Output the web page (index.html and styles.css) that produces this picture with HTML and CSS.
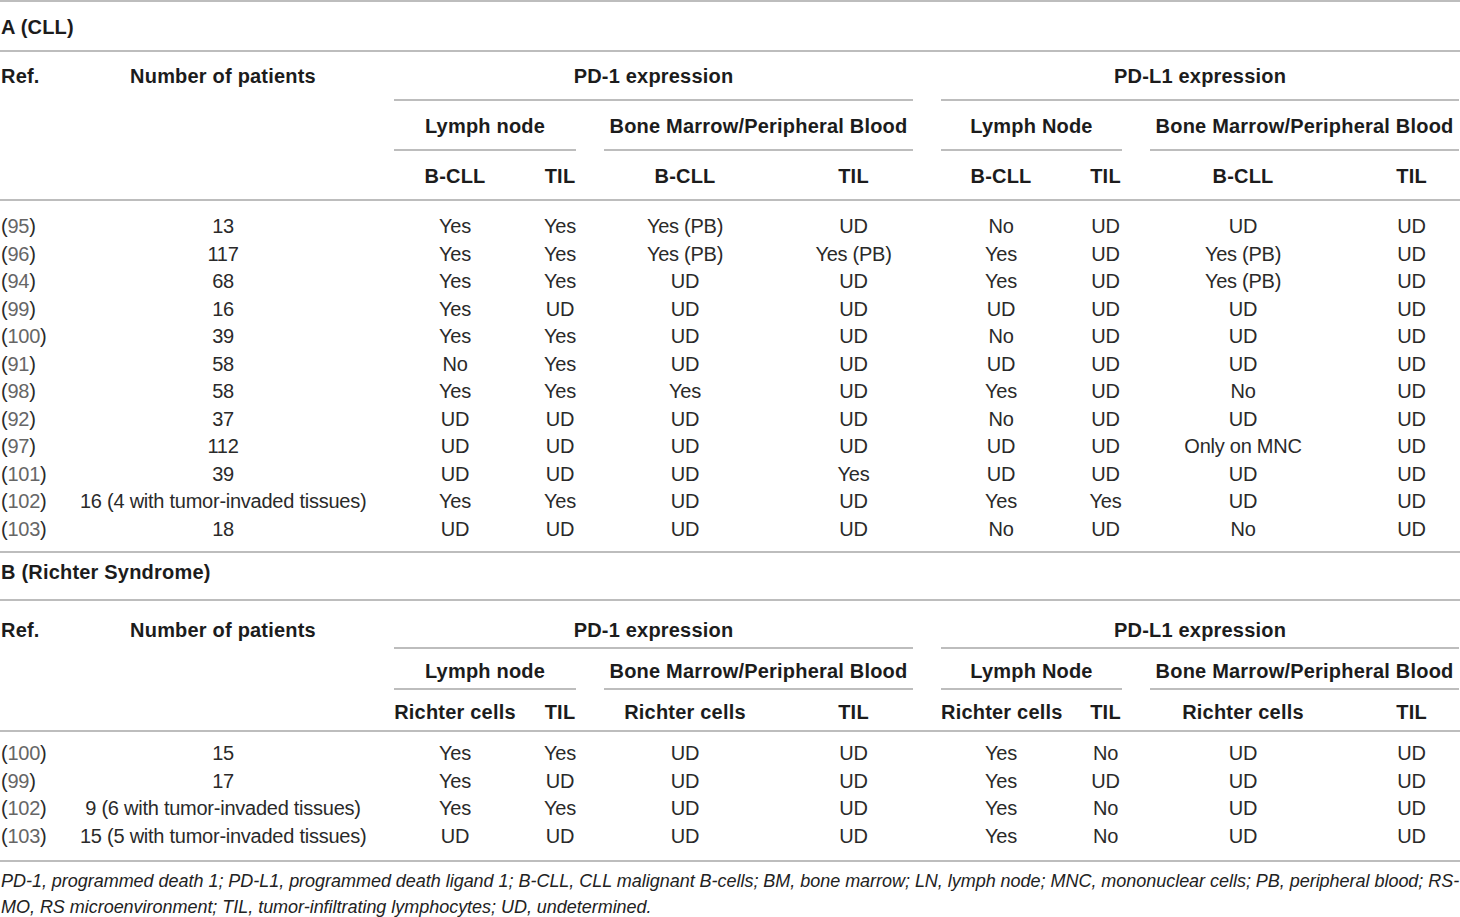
FILE: index.html
```html
<!DOCTYPE html>
<html lang="en">
<head>
  <meta charset="UTF-8" />
  <title>PD-1 / PD-L1 expression in CLL and Richter Syndrome</title>
  <link rel="stylesheet" href="styles.css">
</head>
<body>
  <table class="tbl">
    <colgroup>
      <col class="c-ref"><col class="c-num">
      <col class="c-3"><col class="c-4"><col class="c-5"><col class="c-6">
      <col class="c-7"><col class="c-8"><col class="c-9"><col class="c-10">
    </colgroup>

    <!-- A (CLL) -->
    <tr class="sec sec-a"><td colspan="10">A (CLL)</td></tr>
    <tr class="h1 h1-a">
      <th class="ref" rowspan="3"><span class="cap">Ref.</span></th>
      <th rowspan="3"><span class="cap">Number of patients</span></th>
      <th colspan="4"><span class="cap grp">PD-1 expression</span></th>
      <th colspan="4"><span class="cap grp">PD-L1 expression</span></th>
    </tr>
    <tr class="h2 h2-a">
      <th colspan="2"><span class="cap grp">Lymph node</span></th>
      <th colspan="2"><span class="cap grp">Bone Marrow/Peripheral Blood</span></th>
      <th colspan="2"><span class="cap grp">Lymph Node</span></th>
      <th colspan="2"><span class="cap grp">Bone Marrow/Peripheral Blood</span></th>
    </tr>
    <tr class="h3 h3-a">
      <th><span class="cap">B-CLL</span></th><th><span class="cap">TIL</span></th>
      <th><span class="cap">B-CLL</span></th><th><span class="cap">TIL</span></th>
      <th><span class="cap">B-CLL</span></th><th><span class="cap">TIL</span></th>
      <th><span class="cap">B-CLL</span></th><th><span class="cap">TIL</span></th>
    </tr>
    <tbody class="data data-a">
      <tr><td class="ref">(<span class="lnk">95</span>)</td><td>13</td><td>Yes</td><td>Yes</td><td>Yes (PB)</td><td>UD</td><td>No</td><td>UD</td><td>UD</td><td>UD</td></tr>
      <tr><td class="ref">(<span class="lnk">96</span>)</td><td>117</td><td>Yes</td><td>Yes</td><td>Yes (PB)</td><td>Yes (PB)</td><td>Yes</td><td>UD</td><td>Yes (PB)</td><td>UD</td></tr>
      <tr><td class="ref">(<span class="lnk">94</span>)</td><td>68</td><td>Yes</td><td>Yes</td><td>UD</td><td>UD</td><td>Yes</td><td>UD</td><td>Yes (PB)</td><td>UD</td></tr>
      <tr><td class="ref">(<span class="lnk">99</span>)</td><td>16</td><td>Yes</td><td>UD</td><td>UD</td><td>UD</td><td>UD</td><td>UD</td><td>UD</td><td>UD</td></tr>
      <tr><td class="ref">(<span class="lnk">100</span>)</td><td>39</td><td>Yes</td><td>Yes</td><td>UD</td><td>UD</td><td>No</td><td>UD</td><td>UD</td><td>UD</td></tr>
      <tr><td class="ref">(<span class="lnk">91</span>)</td><td>58</td><td>No</td><td>Yes</td><td>UD</td><td>UD</td><td>UD</td><td>UD</td><td>UD</td><td>UD</td></tr>
      <tr><td class="ref">(<span class="lnk">98</span>)</td><td>58</td><td>Yes</td><td>Yes</td><td>Yes</td><td>UD</td><td>Yes</td><td>UD</td><td>No</td><td>UD</td></tr>
      <tr><td class="ref">(<span class="lnk">92</span>)</td><td>37</td><td>UD</td><td>UD</td><td>UD</td><td>UD</td><td>No</td><td>UD</td><td>UD</td><td>UD</td></tr>
      <tr><td class="ref">(<span class="lnk">97</span>)</td><td>112</td><td>UD</td><td>UD</td><td>UD</td><td>UD</td><td>UD</td><td>UD</td><td>Only on MNC</td><td>UD</td></tr>
      <tr><td class="ref">(<span class="lnk">101</span>)</td><td>39</td><td>UD</td><td>UD</td><td>UD</td><td>Yes</td><td>UD</td><td>UD</td><td>UD</td><td>UD</td></tr>
      <tr><td class="ref">(<span class="lnk">102</span>)</td><td>16 (4 with tumor-invaded tissues)</td><td>Yes</td><td>Yes</td><td>UD</td><td>UD</td><td>Yes</td><td>Yes</td><td>UD</td><td>UD</td></tr>
      <tr><td class="ref">(<span class="lnk">103</span>)</td><td>18</td><td>UD</td><td>UD</td><td>UD</td><td>UD</td><td>No</td><td>UD</td><td>No</td><td>UD</td></tr>
    </tbody>

    <!-- B (Richter Syndrome) -->
    <tr class="sec sec-b"><td colspan="10">B (Richter Syndrome)</td></tr>
    <tr class="h1 h1-b">
      <th class="ref" rowspan="3"><span class="cap">Ref.</span></th>
      <th rowspan="3"><span class="cap">Number of patients</span></th>
      <th colspan="4"><span class="cap grp">PD-1 expression</span></th>
      <th colspan="4"><span class="cap grp">PD-L1 expression</span></th>
    </tr>
    <tr class="h2 h2-b">
      <th colspan="2"><span class="cap grp">Lymph node</span></th>
      <th colspan="2"><span class="cap grp">Bone Marrow/Peripheral Blood</span></th>
      <th colspan="2"><span class="cap grp">Lymph Node</span></th>
      <th colspan="2"><span class="cap grp">Bone Marrow/Peripheral Blood</span></th>
    </tr>
    <tr class="h3 h3-b">
      <th><span class="cap">Richter cells</span></th><th><span class="cap">TIL</span></th>
      <th><span class="cap">Richter cells</span></th><th><span class="cap">TIL</span></th>
      <th><span class="cap">Richter cells</span></th><th><span class="cap">TIL</span></th>
      <th><span class="cap">Richter cells</span></th><th><span class="cap">TIL</span></th>
    </tr>
    <tbody class="data data-b">
      <tr><td class="ref">(<span class="lnk">100</span>)</td><td>15</td><td>Yes</td><td>Yes</td><td>UD</td><td>UD</td><td>Yes</td><td>No</td><td>UD</td><td>UD</td></tr>
      <tr><td class="ref">(<span class="lnk">99</span>)</td><td>17</td><td>Yes</td><td>UD</td><td>UD</td><td>UD</td><td>Yes</td><td>UD</td><td>UD</td><td>UD</td></tr>
      <tr><td class="ref">(<span class="lnk">102</span>)</td><td>9 (6 with tumor-invaded tissues)</td><td>Yes</td><td>Yes</td><td>UD</td><td>UD</td><td>Yes</td><td>No</td><td>UD</td><td>UD</td></tr>
      <tr><td class="ref">(<span class="lnk">103</span>)</td><td>15 (5 with tumor-invaded tissues)</td><td>UD</td><td>UD</td><td>UD</td><td>UD</td><td>Yes</td><td>No</td><td>UD</td><td>UD</td></tr>
    </tbody>
  </table>

  <p class="note">PD-1, programmed death 1; PD-L1, programmed death ligand 1; B-CLL, CLL malignant B-cells; BM, bone marrow; LN, lymph node; MNC, mononuclear cells; PB, peripheral blood; RS-<br>MO, RS microenvironment; TIL, tumor-infiltrating lymphocytes; UD, undetermined.</p>
</body>
</html>
```

FILE: styles.css
```css
html, body {
  margin: 0;
  padding: 0;
  background: #fff;
  overflow: hidden;
}
body {
  font-family: "Liberation Sans", Arial, sans-serif;
  color: #222;
}

.tbl {
  table-layout: fixed;
  border-collapse: separate;
  border-spacing: 0;
  width: 1486px;
  margin-left: -13px;
  border-top: 2px solid #bdbdbd;
}
.c-ref { width: 79px; }
.c-num { width: 314px; }
.c-3 { width: 150px; }
.c-4 { width: 60px; }
.c-5 { width: 190px; }
.c-6 { width: 147px; }
.c-7 { width: 148px; }
.c-8 { width: 61px; }
.c-9 { width: 214px; }
.c-10 { width: 123px; }

.tbl th,
.tbl td {
  padding: 0 14px;
  text-align: center;
  white-space: nowrap;
  vertical-align: top;
}
.tbl th {
  font-size: 20px;
  font-weight: bold;
  letter-spacing: 0.2px;
  color: #1c1c1c;
}
.tbl .ref {
  text-align: left;
}

/* section title rows */
.sec td {
  font-size: 20px;
  font-weight: bold;
  letter-spacing: 0.2px;
  text-align: left;
  color: #1c1c1c;
  border-bottom: 2px solid #bdbdbd;
}
.sec-a td { height: 45px; line-height: 45px; padding-top: 3px; }
.sec-b td { height: 38px; line-height: 38px; padding-bottom: 8px; }

.cap {
  display: block;
}
.grp {
  border-bottom: 2px solid #bdbdbd;
}

/* header rows */
.h1-a .cap { line-height: 46px; padding-top: 1px; }
.h2-a .cap { line-height: 46px; padding-top: 2px; }
.h3-a th { line-height: 46px; padding-top: 2px; border-bottom: 2px solid #bdbdbd; }
.h1-a th[rowspan] { border-bottom: 2px solid #bdbdbd; }

.h1-b .cap { line-height: 34px; padding-top: 12px; }
.h2-b .cap { line-height: 34px; padding-top: 5px; }
.h3-b th { line-height: 34px; padding-top: 5px; padding-bottom: 1px; border-bottom: 2px solid #bdbdbd; }
.h1-b th[rowspan] { border-bottom: 2px solid #bdbdbd; }

/* data rows */
.data td {
  font-size: 20px;
  letter-spacing: -0.25px;
  line-height: 27.5px;
  color: #2a2a2a;
}
.data-a tr:first-child td { padding-top: 12px; }
.data-a tr:last-child td { padding-bottom: 8px; border-bottom: 2px solid #bdbdbd; }
.data-b tr:first-child td { padding-top: 8px; }
.data-b tr:last-child td { padding-bottom: 10px; border-bottom: 2px solid #bdbdbd; }
.lnk {
  color: #666;
}

.note {
  margin: 0;
  padding: 6px 0 0 1px;
  font-size: 18px;
  font-style: italic;
  line-height: 26px;
  letter-spacing: -0.03px;
  color: #222;
  white-space: nowrap;
}
```
